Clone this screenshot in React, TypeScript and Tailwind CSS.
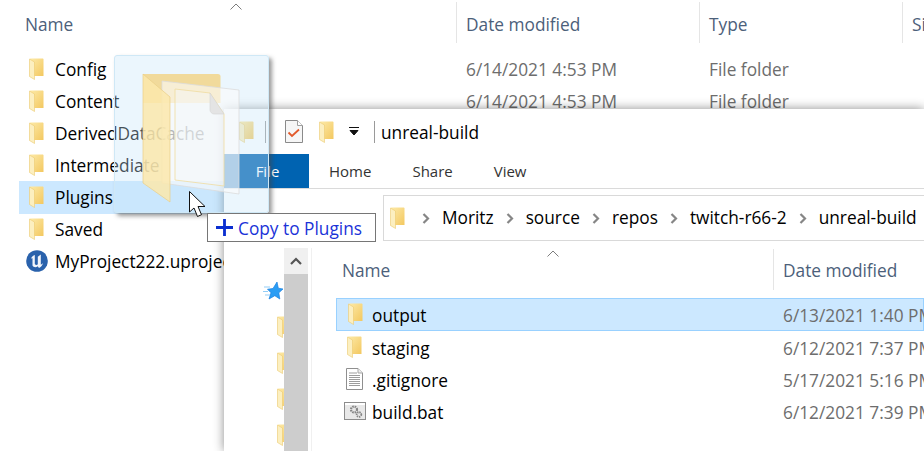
import React from "react";

const font = "font-['Open_Sans','Noto_Sans',sans-serif]";

function Folder({ className = "" }: { className?: string }) {
  return (
    <svg viewBox="0 0 15 22" className={`h-[22px] w-[15px] shrink-0 ${className}`}>
      <defs>
        <linearGradient id="fb" x1="0" y1="0" x2="1" y2="1">
          <stop offset="0" stopColor="#fdeaa8" />
          <stop offset="1" stopColor="#f3c860" />
        </linearGradient>
      </defs>
      <path d="M1 .5h12.500c.5 0 1 .4 1 1V18H5z" fill="url(#fb)" />
      <path d="M.5 1 5.500 4V21.500L.5 18.500z" fill="#fcefc0" stroke="#ecc96f" strokeWidth="0.6" />
    </svg>
  );
}

function Chevron({ className = "" }: { className?: string }) {
  return (
    <svg viewBox="0 0 12 7" className={`h-[7px] w-[12px] ${className}`}>
      <path d="M.5 6.500 6 1l5.500 5.500" fill="none" stroke="#7d7d7d" strokeWidth="1" />
    </svg>
  );
}

function Crumb() {
  return (
    <svg viewBox="0 0 8 11" className="h-[11px] w-[8px] shrink-0">
      <path d="M1.500 1 6 5.500 1.500 10" fill="none" stroke="#868686" strokeWidth="2.2" />
    </svg>
  );
}

function UnrealIcon() {
  return (
    <svg viewBox="0 0 22 22" className="h-[22px] w-[22px] shrink-0">
      <circle cx="11" cy="11" r="10.800" fill="#2a62ac" />
      <path d="M5 8.500C5.800 6.500 7.200 5.500 8.800 5v9c.9 1.300 2.300 1.200 3 .3V6.700L14.800 4.500v10.300l2.200-1.500c-.6 2.200-2.300 3.900-4 4.700l-1.300-1.700c-1.800 1.400-4.300 1-5.200-.8V8.200z" fill="#f2f5fa" />
    </svg>
  );
}

function TextDoc() {
  return (
    <svg viewBox="0 0 17 22" className="h-[22px] w-[17px] shrink-0">
      <path d="M.5.5h11.500l4.500 4.500v16.500H.5z" fill="#fff" stroke="#8f8f8f" />
      <path d="M12 .5V5h4.500" fill="#eee" stroke="#a5a5a5" />
      <path d="M3 5h8M3 7.500h11M3 9.500h11M3 11.500h11M3 13.500h11M3 15.500h11M3 17.500h11" stroke="#9c9c9c" strokeWidth="1" />
    </svg>
  );
}

function BatIcon() {
  return (
    <svg viewBox="0 0 22 18" className="h-[18px] w-[22px] shrink-0">
      <rect x=".5" y=".5" width="21" height="17" fill="#e8e8e8" stroke="#8c8c8c" />
      <path d="M1 1h20v2H1z" fill="#fff" />
      <circle cx="10" cy="7.500" r="3" fill="none" stroke="#858585" strokeWidth="2.2" strokeDasharray="1.6 .8" />
      <circle cx="15" cy="12.500" r="2.300" fill="none" stroke="#858585" strokeWidth="1.800" strokeDasharray="1.300 .7" />
    </svg>
  );
}

function CheckDoc() {
  return (
    <svg viewBox="0 0 18 23" className="h-[23px] w-[18px] shrink-0">
      <path d="M.5.5h12l5 5v17H.5z" fill="#f6f6f6" stroke="#8a8a8a" />
      <path d="M12.500.5v5h5" fill="#fff" stroke="#a0a0a0" />
      <path d="M3.500 12.500 7 16l7-6.500" fill="none" stroke="#e2592a" strokeWidth="1.800" />
    </svg>
  );
}

function StarIcon() {
  return (
    <svg viewBox="0 0 20 19" className="h-[19px] w-[20px]">
      <path d="M14 0l1.300 6.200 4.700.8-4.200 3.800 1 6.200-5-3.300L6 17l2-6.200L4.500 7.200 10 6.500z" fill="#2a9df4" stroke="#1a7fe0" strokeWidth=".7" />
      <path d="M1 5h6M0 9.500h5M2 13h5" stroke="#93cdf6" strokeWidth="1" />
    </svg>
  );
}

function DragGhost() {
  return (
    <div className="absolute left-[114px] top-[55px] z-20 h-[158px] w-[155px] rounded-[3px] border border-[#cfe8f6] bg-[#c5e6fa]/35 shadow-[3px_3px_4px_rgba(70,70,70,0.55)]">
      <svg viewBox="0 0 100 130" className="absolute left-[27px] top-[17px] h-[130px] w-[100px]">
        <path d="M1 1h75c1.500 0 2.500 1 2.500 2.500V30H1z" fill="#f2d589" fillOpacity=".85" />
        <path d="M20 8 97 17V121L20 110z" fill="#fbfbfb" fillOpacity=".6" stroke="#dcdcdc" strokeWidth=".8" />
        <path d="M33 16 68 20 82 41V113L33 107z" fill="#f5f7f8" fillOpacity=".45" stroke="#f0dca0" strokeWidth=".8" />
        <path d="M68 20 82 41H72C70 41 68 39 68 37z" fill="#e4e4e4" stroke="#d5d5d5" strokeWidth=".6" />
        <path d="M1 1 28 24V129L1 110z" fill="#fbe8ac" fillOpacity=".85" stroke="#e9cf87" strokeWidth=".7" />
      </svg>
    </div>
  );
}

function CopyTooltip() {
  return (
    <div className={`absolute left-[207px] top-[213px] z-30 flex h-[29px] w-[169px] items-center gap-[5px] whitespace-nowrap border border-[#767676] bg-white pl-[8px] text-[17.3px] text-[#1a33d8] ${font}`}>
      <svg viewBox="0 0 18 18" className="h-[17px] w-[17px] shrink-0">
        <path d="M9 0v18M0 9h18" stroke="#0b2fd0" strokeWidth="3" />
      </svg>
      <span className="pt-[2px]">Copy to Plugins</span>
    </div>
  );
}

function Cursor() {
  return (
    <svg viewBox="0 0 20 27" className="absolute left-[189px] top-[191px] z-40 h-[27px] w-[20px]">
      <path d="M.5.5V21l4.500-4 3.500 8.500 4-1.800L9 15.500h7z" fill="#fff" stroke="#111" strokeWidth="1" />
    </svg>
  );
}

const backRows = [
  { name: "Config", date: "6/14/2021 4:53 PM", type: "File folder" },
  { name: "Content", date: "6/14/2021 4:53 PM", type: "File folder" },
  { name: "DerivedDataCache" },
  { name: "Intermediate" },
  { name: "Plugins", selected: true },
  { name: "Saved" },
  { name: "MyProject222.uproject", unreal: true },
];

function BackWindow() {
  return (
    <div className="h-full bg-white">
      <div className="relative flex h-[44px] items-start whitespace-nowrap pt-[2px] text-[17.3px] text-[#4c607a]">
        <Chevron className="absolute left-[230px] top-[3px]" />
        <div className="w-[456px] shrink-0 pl-[25px] pt-[10px]">Name</div>
        <div className="h-[41px] w-[243px] shrink-0 border-l border-[#e5e5e5] pl-[9px] pt-[10px]">Date modified</div>
        <div className="h-[41px] w-[203px] shrink-0 border-l border-[#e5e5e5] pl-[9px] pt-[10px]">Type</div>
        <div className="h-[41px] w-[60px] shrink-0 border-l border-[#e5e5e5] pl-[9px] pt-[10px]">Size</div>
      </div>
      <div className="mt-[9px] flex flex-col">
        {backRows.map((r) => (
          <div key={r.name} className="flex h-[32px] items-center text-[17.3px]">
            {r.unreal ? (
              <div className="ml-[26px] flex w-[198px] shrink-0 items-center gap-[7px] whitespace-nowrap text-black">
                <UnrealIcon />
                <span className="pt-[2px]">{r.name}</span>
              </div>
            ) : (
              <div className={`ml-[19px] flex h-[33px] w-[205px] shrink-0 items-center gap-[11px] whitespace-nowrap pl-[10px] text-black ${r.selected ? "bg-[#cce8ff]" : ""}`}>
                <Folder />
                <span className="pt-[2px]">{r.name}</span>
              </div>
            )}
            {r.date && <div className="ml-[242px] w-[243px] shrink-0 pt-[2px] text-[#6d6d6d]">{r.date}</div>}
            {r.type && <div className="pt-[2px] text-[#6d6d6d]">{r.type}</div>}
          </div>
        ))}
      </div>
    </div>
  );
}

const frontRows = [
  { name: "output", date: "6/13/2021 1:40 PM", icon: "folder", selected: true },
  { name: "staging", date: "6/12/2021 7:37 PM", icon: "folder" },
  { name: ".gitignore", date: "5/17/2021 5:16 PM", icon: "text" },
  { name: "build.bat", date: "6/12/2021 7:39 PM", icon: "bat" },
];

function FrontWindow() {
  return (
    <div className="absolute bottom-0 left-[224px] right-0 top-[109px] z-10 flex flex-col bg-white shadow-[0_0_10px_rgba(0,0,0,0.45)]">
      <div className="flex h-[45px] items-center">
        <Folder className="ml-[15px]" />
        <div className="ml-[11px] h-[22px] w-px bg-[#9a9a9a]" />
        <div className="ml-[19px]"><CheckDoc /></div>
        <Folder className="ml-[16px]" />
        <svg viewBox="0 0 10 9" className="ml-[15px] h-[9px] w-[10px]">
          <path d="M0 .5h10M1 3.500h8L5 8z" stroke="#111" strokeWidth="1" fill="#111" />
        </svg>
        <div className="ml-[15px] h-[22px] w-px bg-[#9a9a9a]" />
        <span className="ml-[6px] pt-[2px] text-[17.3px] text-black">unreal-build</span>
      </div>
      <div className="flex h-[35px] items-center border-b border-[#dadada] text-[15px] text-[#333]">
        <div className="flex h-full w-[85px] items-center justify-center pl-[2px] text-white bg-[#0063b1]">File</div>
        <span className="ml-[20px]">Home</span>
        <span className="ml-[41px]">Share</span>
        <span className="ml-[41px]">View</span>
      </div>
      <div className="flex h-[52px] items-center pl-[159px] pt-[6px]">
        <div className="flex h-[46px] min-w-0 flex-1 items-center gap-[12px] overflow-hidden whitespace-nowrap border-y border-l border-[#d9d9d9] pl-[6px] text-[17.3px] text-black">
          <Folder className="mr-[5px]" />
          <Crumb /><span>Moritz</span>
          <Crumb /><span>source</span>
          <Crumb /><span>repos</span>
          <Crumb /><span>twitch-r66-2</span>
          <Crumb /><span>unreal-build</span>
        </div>
      </div>
      <div className="flex min-h-0 flex-1 pt-[7px]">
        <div className="flex w-[60px] flex-col items-end overflow-hidden pt-[34px]">
          <div className="mr-[1px]"><StarIcon /></div>
          <div className="flex flex-col gap-[14px] pt-[15px] [&>div]:w-[7px] [&>div]:overflow-hidden">
            <div><Folder /></div>
            <div><Folder /></div>
            <div><Folder /></div>
            <div><Folder /></div>
          </div>
        </div>
        <div className="flex w-[24px] flex-col bg-[#cdcdcd]">
          <div className="flex h-[26px] items-center justify-center bg-[#f0f0f0]">
            <svg viewBox="0 0 12 8" className="h-[8px] w-[12px]">
              <path d="M1 7 6 2l5 5" fill="none" stroke="#555" strokeWidth="2.2" />
            </svg>
          </div>
        </div>
        <div className="ml-[3px] w-px bg-[#f0f0f0]" />
        <div className="min-w-0 flex-1 overflow-hidden">
          <div className="relative flex h-[50px] items-start whitespace-nowrap pt-[1px] text-[17.3px] text-[#4c607a]">
            <Chevron className="absolute left-[235px] top-[2px]" />
            <div className="w-[461px] shrink-0 pl-[30px] pt-[9px]">Name</div>
            <div className="h-[41px] shrink-0 border-l border-[#e5e5e5] pl-[9px] pt-[9px]">Date modified</div>
          </div>
          <div className="flex flex-col">
            {frontRows.map((r) => (
              <div key={r.name} className={`ml-[24px] flex items-center whitespace-nowrap text-[17.3px] ${r.selected ? "mb-[1px] h-[33px] border border-[#99d1ff] bg-[#cce8ff]" : "h-[32px]"}`}>
                <div className={`-mt-[2px] flex shrink-0 justify-center pl-[1px] ${r.selected ? "w-[35px]" : "w-[36px]"}`}>
                  {r.icon === "folder" && <Folder />}
                  {r.icon === "text" && <TextDoc />}
                  {r.icon === "bat" && <BatIcon />}
                </div>
                <div className="w-[411px] shrink-0 pt-[2px] text-black">{r.name}</div>
                <div className="shrink-0 pt-[2px] text-[#6d6d6d]">{r.date}</div>
              </div>
            ))}
          </div>
        </div>
      </div>
    </div>
  );
}

export default function App() {
  return (
    <div className={`relative h-[451px] w-[924px] overflow-hidden bg-white ${font}`}>
      <BackWindow />
      <FrontWindow />
      <DragGhost />
      <CopyTooltip />
      <Cursor />
    </div>
  );
}
